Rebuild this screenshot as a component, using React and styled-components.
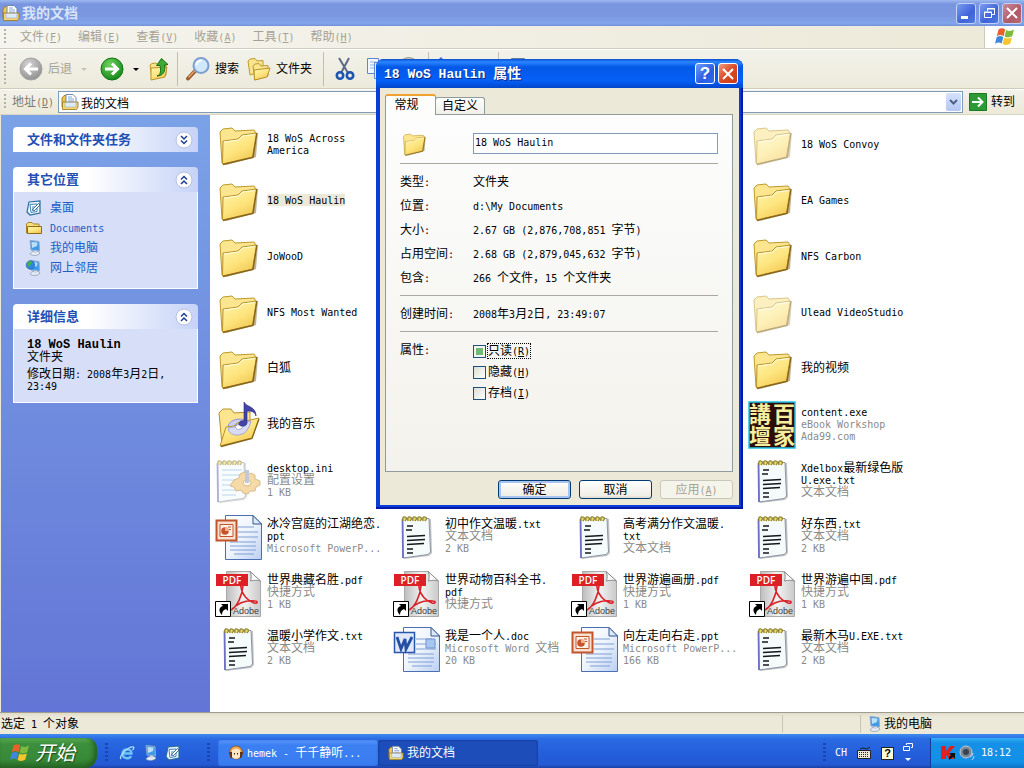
import React, { useEffect, useRef } from 'react';
import styled, { createGlobalStyle, css } from 'styled-components';

const COLORS = {
  FACE: '#ece9d8',
  LINE: '#cfccbc',
  LINK: '#215dc6',
  META: '#8a8a88',
  DISABLED: '#a5a294',
};

const CJK = "'Liberation Sans', 'Noto Sans CJK SC', sans-serif";
const MONO = "'DejaVu Sans Mono', 'Liberation Mono', monospace";

const MENUS = [
  ['文件', 'F'],
  ['编辑', 'E'],
  ['查看', 'V'],
  ['收藏', 'A'],
  ['工具', 'T'],
  ['帮助', 'H'],
];

const PLACES = [
  { name: '桌面', icon: 'desktop' },
  { name: 'Documents', icon: 'smallFolder' },
  { name: '我的电脑', icon: 'computer' },
  { name: '网上邻居', icon: 'network' },
];

const FILES = [
  { col: 1, icon: 'folder', name: ['18 WoS Across', 'America'] },
  { col: 4, icon: 'folder', name: ['18 WoS Convoy'], faded: true },
  { col: 1, icon: 'folder', name: ['18 WoS Haulin'], selected: true },
  { col: 4, icon: 'folder', name: ['EA Games'] },
  { col: 1, icon: 'folder', name: ['JoWooD'] },
  { col: 4, icon: 'folder', name: ['NFS Carbon'] },
  { col: 1, icon: 'folder', name: ['NFS Most Wanted'] },
  { col: 4, icon: 'folder', name: ['Ulead VideoStudio'], faded: true },
  { col: 1, icon: 'folder', name: ['白狐'] },
  { col: 4, icon: 'folder', name: ['我的视频'] },
  { col: 1, icon: 'music', name: ['我的音乐'] },
  { col: 4, icon: 'ebook', name: ['content.exe'], meta: ['eBook Workshop', 'Ada99.com'] },
  { col: 1, icon: 'config', name: ['desktop.ini'], meta: ['配置设置', '1 KB'], faded: true },
  { col: 4, icon: 'text', name: ['Xdelbox最新绿色版', 'U.exe.txt'], meta: ['文本文档'] },
  { col: 1, icon: 'ppt', name: ['冰冷宫庭的江湖绝恋.', 'ppt'], meta: ['Microsoft PowerP...'] },
  { col: 2, icon: 'text', name: ['初中作文温暖.txt'], meta: ['文本文档', '2 KB'] },
  { col: 3, icon: 'text', name: ['高考满分作文温暖.', 'txt'], meta: ['文本文档'] },
  { col: 4, icon: 'text', name: ['好东西.txt'], meta: ['文本文档', '2 KB'] },
  { col: 1, icon: 'pdf', name: ['世界典藏名胜.pdf'], meta: ['快捷方式', '1 KB'] },
  { col: 2, icon: 'pdf', name: ['世界动物百科全书.', 'pdf'], meta: ['快捷方式'] },
  { col: 3, icon: 'pdf', name: ['世界游遍画册.pdf'], meta: ['快捷方式', '1 KB'] },
  { col: 4, icon: 'pdf', name: ['世界游遍中国.pdf'], meta: ['快捷方式', '1 KB'] },
  { col: 1, icon: 'text', name: ['温暖小学作文.txt'], meta: ['文本文档', '2 KB'] },
  { col: 2, icon: 'word', name: ['我是一个人.doc'], meta: ['Microsoft Word 文档', '20 KB'] },
  { col: 3, icon: 'ppt', name: ['向左走向右走.ppt'], meta: ['Microsoft PowerP...', '166 KB'] },
  { col: 4, icon: 'text', name: ['最新木马U.EXE.txt'], meta: ['文本文档', '2 KB'] },
];

const DETAILS = [
  ['类型:', '文件夹'],
  ['位置:', 'd:\\My Documents'],
  ['大小:', '2.67 GB (2,876,708,851 字节)'],
  ['占用空间:', '2.68 GB (2,879,045,632 字节)'],
  ['包含:', '266 个文件，15 个文件夹'],
];

// latin runs are set in a half-width face, the rest stays in the CJK face
function Mixed({ children }) {
  return children
    .split(/([\x20-\x7e]+)/)
    .filter(Boolean)
    .map((run, i) => (/[\x20-\x7e]/.test(run) ? <Latin key={i}>{run}</Latin> : run));
}

function AccessKey({ letter }) {
  return (
    <Latin>
      (<u>{letter}</u>)
    </Latin>
  );
}

/* ---------- icons ---------- */

function FolderIcon({ size = 48 }) {
  return (
    <Svg width={size} height={size} viewBox="0 0 48 48">
      <path d="M10 44 39 36.500 44 11 42 36 12 44z" fill="#7d6a2a" opacity=".5" />
      <path d="M6 11 9 8 18 7 21 10 40 9 42 12 38 36 8 42z" fill="#fbe58e" stroke="#bd9a2c" />
      <path d="M9 20 24 18 28 14 42.500 12 38.500 36 8.500 43z" fill="url(#folderFront)" stroke="#b8922a" />
      <path d="M10 21 24.500 19 28.500 15 41 13.500" fill="none" stroke="#fffbe0" />
      <path d="M9 43.500 39 36.500 43 12" fill="none" stroke="#866315" strokeWidth="1.400" />
    </Svg>
  );
}

function MusicIcon() {
  return (
    <Svg width="48" height="48" viewBox="0 0 48 48">
      <path d="M5 12 9 8 17 8 20 12 36 11 36 30 8 44z" fill="#fbe58e" stroke="#b8922a" />
      <ellipse cx="26" cy="26" rx="12" ry="8" fill="#cdd0f2" stroke="#8f93cf" />
      <path d="M12 26 20 25 23 22 45 17 38 37 6 45z" fill="url(#folderFront)" stroke="#b8922a" />
      <path d="M14 27q1 8 11 7 9-1 12-14L23 23l-3 3z" fill="#d9daf3" stroke="#a4a6d6" />
      <path d="M21 26q2 4 6 2 3-2 3-5l-7 1z" fill="#fff" stroke="#a4a6d6" />
      <path d="M7 45.500 38 37.500 45 18" fill="none" stroke="#866315" strokeWidth="1.300" />
      <path d="M30 17V1c2 5 12 4 12 14-1-4-4-5-9-5v12c0 4-8 4-8 1 0-3 3-4 5-3z" fill="#4444a8" stroke="#25256e" strokeWidth=".6" />
    </Svg>
  );
}

function NotepadIcon({ gear }) {
  const x = gear ? -7 : 0;
  return (
    <Svg width="48" height="48" viewBox="0 0 48 48">
      <g transform={`translate(${x} 0)`}>
        <path d="M12 7 39 6 40 40 37 43 12 46z" fill="#9a9aa2" opacity=".6" />
        <path d="M10.500 6 37 5.500 38.500 39 36 41.500 11 45z" fill="#f5fbfa" stroke="#8d97a8" />
        <path d="M10.500 6 11 45" stroke="#6d6fc4" strokeWidth="1.800" />
        {gear ? (
          <path d="M15 13h20M15 18h20M15 23h20M15 28h20M15 33h20M15 38h14" stroke="#7fb6e0" />
        ) : (
          <path d="M15 13h6M14 17h6M15 23.500 33 22.500M15 27.500 33 26.500M15 31.500 32 30.500M15 36h6M15 40h6" stroke="#15181c" strokeWidth="1.500" />
        )}
        <path
          d="M11 8q-1-5 2-4t0 4M16 8q-1-5 2-4t0 4M21 8q-1-5 2-4t0 4M26 8q-1-5 2-4t0 4M31 8q-1-5 2-4t0 4"
          fill="#e9dc6a"
          stroke="#8f8236"
          strokeWidth="1.300"
        />
      </g>
      {gear && (
        <g>
          <path
            d="M20 23l5-2 1-4 4-2 3 3 4-2 4 2 0 4 5 2v4l-4 2-1 4-5 0-2 3-5-1-2-3-5 1-2-4-4-1z"
            fill="#eebd62"
            stroke="#b98630"
          />
          <ellipse cx="33" cy="26" rx="4" ry="3" fill="#fff4d8" stroke="#b98630" />
          <path d="M31 13h4v13h-4z" fill="#8ea0b8" />
        </g>
      )}
    </Svg>
  );
}

function OfficeIcon({ kind }) {
  const word = kind === 'word';
  return (
    <Svg width="48" height="48" viewBox="0 0 48 48">
      <path d="M11.500 2.500H39L47.500 11V46.500H11.500z" fill="url(#officePage)" stroke="#4a6fb5" />
      <path d="M39 2.500V11H47.500z" fill="#dce8fb" stroke="#34558f" />
      <path d="M24 14h16M24 19h20M24 24h20M16 29h26M16 33h26M16 37h26M20 41h20" stroke="#7f9fd3" />
      {word ? (
        <g>
          <path d="M34 14h9v9h-9z" fill="#a9c6f0" stroke="#6f95d2" />
          <path d="M2.500 7.500h20v20h-20z" fill="#dfe9fb" stroke="#2a56a8" strokeWidth="1.500" />
          <path d="M5 12l4 12 4-10 1 10 6-12" fill="none" stroke="#2450a4" strokeWidth="2.800" />
        </g>
      ) : (
        <g>
          <path d="M2.500 7.500h20v20h-20z" fill="#fbe0d0" stroke="#c2552c" strokeWidth="2" />
          <path d="M6 11.500h13v12H6z" fill="#fff1e6" stroke="#c2552c" />
          <circle cx="11" cy="18" r="3.800" fill="#c2552c" />
          <path d="M11 18V14a4 4 0 0 1 4 4z" fill="#f7b08c" />
          <path d="M14 14h3M15 16.500h2" stroke="#c2552c" />
        </g>
      )}
    </Svg>
  );
}

function PdfIcon() {
  return (
    <Svg width="48" height="48" viewBox="0 0 48 48">
      <path d="M12.500 2.500H36L46.500 12V47.500H12.500z" fill="url(#pdfPage)" stroke="#a9a9a9" />
      <path d="M36 2.500C38 6 37 10 36.500 12c4-1 7-1 10 0z" fill="#fff" stroke="#8c8c8c" />
      <path
        d="M17 41c6-3 11-14 12-24 0-3-3-3-2 1 1 8 7 14 13 16 4 1 4-2 1-2-8-1-17 2-24 9z"
        fill="none"
        stroke="#d8232b"
        strokeWidth="1.600"
      />
      <path d="M2 5h32v12H2z" fill="#dd1f26" />
      <text x="18" y="15" textAnchor="middle" fill="#fff" fontFamily="'Open Sans', sans-serif" fontWeight="600" fontSize="10">
        PDF
      </text>
      <text x="45" y="45" textAnchor="end" fill="#3c3c3c" fontFamily="'Liberation Sans Narrow', 'Liberation Sans', sans-serif" fontSize="9">
        Adobe
      </text>
      <path d="M1.500 32.500h15v15h-15z" fill="#fff" stroke="#000" />
      <path d="M7 35h7v7l-2-2c-3 1-4 3-4 6-4-4-3-8 1-9z" fill="#000" />
    </Svg>
  );
}

function EbookIcon() {
  return (
    <Svg width="48" height="48" viewBox="0 0 48 48">
      <path d="M1 1h46v46H1z" fill="#2c0d08" stroke="#22c3e6" strokeWidth="1.500" />
      <g fill="#f4ee9e" fontFamily={CJK} fontWeight="700" fontSize="22">
        <text x="1" y="21">講</text>
        <text x="25" y="21">百</text>
        <text x="1" y="43">壇</text>
        <text x="25" y="43">家</text>
      </g>
    </Svg>
  );
}

function DocumentsIcon({ size = 18 }) {
  return (
    <Svg width={size} height={size} viewBox="0 0 18 18">
      <path d="M1 5 3 2.500H6V14H1z" fill="#f1c84f" stroke="#8f6d18" strokeWidth=".8" />
      <path d="M5 1.500h7l3 3v8H5z" fill="#fff" stroke="#6f86ad" />
      <path d="M7 4h4M7 6h6M7 8h6" stroke="#7fa4dc" />
      <path d="M1.500 16.500V9H17v5l-1.500 2.500z" fill="#f6d873" stroke="#96721b" strokeWidth=".8" />
      <path d="M4 9.500h11v4.500H4z" fill="#dfeaf7" stroke="#9aa8ba" strokeWidth=".6" />
    </Svg>
  );
}

function ComputerIcon({ size = 16, globe }) {
  return (
    <Svg width={size} height={size} viewBox="0 0 16 16">
      <path d="M4 .5 13 1.500 13.500 11 5 10z" fill="#3d9bea" stroke="#8fa9c9" />
      <path d="M5.500 2 11.500 2.500 11 6 6 8z" fill="#b9e1fc" />
      <path d="M4 14c1-3 8-4 10-1-1 3-9 3-10 1z" fill="#e8edf5" stroke="#8392ab" strokeWidth=".7" />
      <path d="M8 10.500h3v2.500H8z" fill="#ccd6e5" />
      {globe && (
        <g>
          <circle cx="4.500" cy="5" r="4.300" fill="#2e86de" stroke="#1b5ba6" strokeWidth=".6" />
          <path d="M1 4c2-4 4-3 5-2 0 2-2 2-2 4-1 2-3 0-3-2z" fill="#46b14b" />
        </g>
      )}
    </Svg>
  );
}

function DesktopIcon({ size = 16 }) {
  return (
    <Svg width={size} height={size} viewBox="0 0 16 16">
      <path d="M3 2 14 1 14 13 4 15 1 12z" fill="#e9f4fb" stroke="#2e6c9c" strokeWidth="1.200" />
      <path d="M4 4.500 11 4v7.500L5 12.500z" fill="#fff" stroke="#3d87ba" />
      <path d="M6 10 12.500 3.500 14 5 8 11z" fill="#fff" stroke="#2b5f89" strokeWidth=".9" />
      <path d="M6 7h3M6 9h2" stroke="#3d87ba" />
    </Svg>
  );
}

function SmallFolderIcon() {
  return (
    <Svg width="16" height="16" viewBox="0 0 16 16">
      <path d="M.5 4 2 2.500H6L7.500 4H13V13H.5z" fill="#f6de7a" stroke="#a98322" />
      <path d="M1.500 13.500V6.500H15.500V13.500z" fill="url(#folderFront)" stroke="#8f6d18" />
    </Svg>
  );
}

function FlagIcon({ size }) {
  return (
    <Svg width={size} height={size} viewBox="0 0 20 20">
      <path d="M3.500 2.500Q7 0 10.200 2.500L8.600 9.200Q5.500 7 1.800 9.200z" fill="#e8602c" />
      <path d="M11.200 3Q15 5 19 2.500L17.200 9.300Q13 11.500 9.500 9.500z" fill="#7cbb3c" />
      <path d="M1.600 10.200Q5.500 8 8.300 10.200L6.700 16.500Q3.500 14.500 0 16.800z" fill="#3f86dd" />
      <path d="M9.200 10.800Q13 12.500 16.900 10.400L15.200 16.800Q11.500 19 7.600 17z" fill="#f7c52d" />
    </Svg>
  );
}

function ArrowCircle({ left }) {
  const tone = left ? ['#d6d6d6', '#8d8d8d', '#a3a3a3'] : ['#6fd35e', '#128417', '#0d7412'];
  const id = left ? 'backTone' : 'forwardTone';
  return (
    <Svg width="24" height="24" viewBox="0 0 24 24">
      <defs>
        <radialGradient id={id} cx=".4" cy=".3" r=".75">
          <stop offset="0" stopColor={tone[0]} />
          <stop offset="1" stopColor={tone[1]} />
        </radialGradient>
      </defs>
      <circle cx="12" cy="12" r="11" fill={`url(#${id})`} stroke={tone[2]} />
      <path
        d={left ? 'M19 12H7M12 6.500 6.500 12 12 17.500' : 'M5 12H17M12 6.500 17.500 12 12 17.500'}
        fill="none"
        stroke="#fff"
        strokeWidth="3"
      />
    </Svg>
  );
}

function UpFolderIcon() {
  return (
    <Svg width="24" height="24" viewBox="0 0 24 24">
      <path d="M2 8 4 6.500 8 6 10 8 18 8V18L4 22z" fill="#fae48d" stroke="#c09a2a" />
      <path d="M3 11 19 10 17 20 3 23z" fill="url(#folderFront)" stroke="#b8922a" />
      <path d="M9 19C13 18 13 13 12 8.500H8.500L13.500 1.500 20 7.500 16.500 8C18 14 15 19 9 19z" fill="#3cab33" stroke="#166f14" />
    </Svg>
  );
}

function SearchIcon() {
  return (
    <Svg width="24" height="24" viewBox="0 0 24 24">
      <path d="M10 13 2 21.500" stroke="#9c5a2a" strokeWidth="4" strokeLinecap="round" />
      <path d="M9.500 13 2.500 20.500" stroke="#e3a26a" strokeWidth="1.500" />
      <circle cx="15" cy="8.500" r="7.500" fill="#cfe9fb" stroke="#7d9fd0" strokeWidth="2" />
      <path d="M10.500 8a5 5 0 0 1 5-4.500" fill="none" stroke="#fff" strokeWidth="2" />
    </Svg>
  );
}

function FoldersIcon() {
  return (
    <Svg width="24" height="24" viewBox="0 0 24 24">
      <path d="M1 4 3 2 8 1.500 10 4 16 3.500V14L3 18z" fill="#fae48d" stroke="#c09a2a" />
      <path d="M6 9 8 7 12 6.500 14 9 21 8.500V19L8 23z" fill="#fae48d" stroke="#c09a2a" />
      <path d="M7 13 23 11 20 20 7.500 23z" fill="url(#folderFront)" stroke="#b8922a" />
    </Svg>
  );
}

function ScissorsIcon() {
  return (
    <Svg width="24" height="24" viewBox="0 0 24 24">
      <path d="M4 1 13 16M14 1 6 16" stroke="#5b6b86" strokeWidth="2" />
      <ellipse cx="5" cy="18.500" rx="3.200" ry="3.300" fill="none" stroke="#1c55b3" strokeWidth="2.600" />
      <ellipse cx="15" cy="18.500" rx="3.200" ry="3.300" fill="none" stroke="#1c55b3" strokeWidth="2.600" />
    </Svg>
  );
}

function CopyIcon() {
  return (
    <Svg width="24" height="24" viewBox="0 0 24 24">
      <path d="M.5 1.500h11v15H.5z" fill="#f2f7ff" stroke="#5d87cf" />
      <path d="M3 5h6M3 8h6M3 11h6" stroke="#8fb0e6" />
      <path d="M7.500 5.500h11v16h-11z" fill="#e3eeff" stroke="#5d87cf" />
    </Svg>
  );
}

function EditIcon({ kind }) {
  return (
    <Svg width="24" height="24" viewBox="0 0 24 24">
      {kind === 'paste' && <path d="M1 4Q10-3 18 4V22H1z" fill="#c9c5b5" stroke="#99968a" />}
      {kind === 'delete' && <path d="M3 1 20 20M19 3 4 21" stroke="#3b6fcf" strokeWidth="3" />}
      {kind === 'view' && <path d="M4.500 1.500h13v17h-13z" fill="#fff" stroke="#5d79a8" />}
    </Svg>
  );
}

function KeyboardIcon() {
  return (
    <Svg width="16" height="16" viewBox="0 0 16 16">
      <path d="M1.500 5.500h13v8h-13z" fill="#ece9d8" stroke="#222" />
      <path d="M3 7.500h10M3 9.500h10M3 11.500h10" stroke="#222" strokeDasharray="1 1" />
      <path d="M4 4 7 3 11 4 14 2" fill="none" stroke="#222" />
    </Svg>
  );
}

function IeIcon() {
  return (
    <Svg width="16" height="16" viewBox="0 0 16 16">
      <path d="M4 8.500h8.500C12.500 3 4 3 3.500 8.500c0 5.500 7 6 8.500 2.500" fill="none" stroke="#6cc5f5" strokeWidth="2.400" />
      <path d="M2 14C-1 11 10 1 14.500 2c1 1 0 2-1 3" fill="none" stroke="#b5e3fb" strokeWidth="1.200" />
    </Svg>
  );
}

function PlayerIcon() {
  return (
    <Svg width="16" height="16" viewBox="0 0 16 16">
      <circle cx="8" cy="7.500" r="6.500" fill="#f5a94d" stroke="#8a4d18" strokeWidth=".8" />
      <path d="M4 5q4-3 8 0v7q-4 4-8 0z" fill="#ffe7c6" />
      <path d="M1 7h3v6H2.500zM12 7h3l-1.500 6H12z" fill="#5f3513" />
      <path d="M6.500 8v1.500M9.500 8v1.500" stroke="#222" />
    </Svg>
  );
}

function TrayIcons() {
  return (
    <>
      <Svg width="16" height="16" viewBox="0 0 16 16">
        <path d="M1 1h5v5l4-5h5L9 8l5 6H9L6 10v4H1z" fill="#e2201e" />
        <path d="M9 8h6v6l-2-2-4 3 0-3 2-2z" fill="#111" />
      </Svg>
      <Svg width="16" height="16" viewBox="0 0 16 16">
        <circle cx="7" cy="7" r="6" fill="#7d8896" stroke="#c3ccd8" />
        <circle cx="7" cy="7" r="3" fill="#39424f" />
        <path d="M11 12q3-1 3-4M13 15q2-2 2-4" fill="none" stroke="#bcd6f4" />
      </Svg>
    </>
  );
}

function Chevrons({ down }) {
  return (
    <Svg width="18" height="18" viewBox="0 0 18 18">
      <circle cx="9" cy="9" r="8" fill="#fff" stroke="#b6bfdf" />
      <path
        d={down ? 'M6 5 9 8 12 5M6 9.500 9 12.500 12 9.500' : 'M6 8.500 9 5.500 12 8.500M6 13 9 10 12 13'}
        fill="none"
        stroke="#1c3f94"
        strokeWidth="1.500"
      />
    </Svg>
  );
}

function CloseCross() {
  return (
    <Svg width="12" height="12" viewBox="0 0 12 12">
      <path d="M1 1 11 11M11 1 1 11" stroke="#fff" strokeWidth="2" />
    </Svg>
  );
}

const ICONS = {
  folder: () => <FolderIcon />,
  music: () => <MusicIcon />,
  ebook: () => <EbookIcon />,
  config: () => <NotepadIcon gear />,
  text: () => <NotepadIcon />,
  ppt: () => <OfficeIcon kind="ppt" />,
  word: () => <OfficeIcon kind="word" />,
  pdf: () => <PdfIcon />,
  desktop: () => <DesktopIcon />,
  smallFolder: () => <SmallFolderIcon />,
  computer: () => <ComputerIcon />,
  network: () => <ComputerIcon globe />,
};

/* ---------- parts ---------- */

function SharedGradients() {
  return (
    <HiddenSvg width="0" height="0" aria-hidden="true">
      <defs>
        <linearGradient id="folderFront" x1="0" y1="0" x2=".6" y2="1">
          <stop offset="0" stopColor="#fff6b5" />
          <stop offset=".6" stopColor="#fde47c" />
          <stop offset="1" stopColor="#f3c958" />
        </linearGradient>
        <linearGradient id="officePage" x1="0" y1="0" x2="1" y2="1">
          <stop offset="0" stopColor="#ffffff" />
          <stop offset=".5" stopColor="#eef4fd" />
          <stop offset="1" stopColor="#b9cff2" />
        </linearGradient>
        <linearGradient id="pdfPage" x1="0" y1="0" x2="1" y2="0">
          <stop offset="0" stopColor="#bdbdbd" />
          <stop offset=".5" stopColor="#f2f2f2" />
          <stop offset="1" stopColor="#cacaca" />
        </linearGradient>
      </defs>
    </HiddenSvg>
  );
}

function FileItem({ file }) {
  return (
    <FileCell $col={file.col}>
      <FileIcon $faded={file.faded}>{ICONS[file.icon]()}</FileIcon>
      <FileText>
        {file.name.map((line) => (
          <FileName key={line} $selected={file.selected}>
            <Mixed>{line}</Mixed>
          </FileName>
        ))}
        {file.meta?.map((line) => (
          <FileMeta key={line}>
            <Mixed>{line}</Mixed>
          </FileMeta>
        ))}
      </FileText>
    </FileCell>
  );
}

function Explorer() {
  return (
    <Window>
      <TitleBar>
        <DocumentsIcon />
        <h1>我的文档</h1>
        <CaptionButtons>
          <CaptionButton type="button" aria-label="Minimize">
            <Svg width="12" height="12" viewBox="0 0 12 12">
              <path d="M1 9h7v3H1z" fill="#fff" />
            </Svg>
          </CaptionButton>
          <CaptionButton type="button" aria-label="Restore">
            <Svg width="12" height="12" viewBox="0 0 12 12">
              <path d="M4.500 4V1.500h7v6H9M4 2h8M1.500 5.500h7v5h-7zM1 5h8" fill="none" stroke="#fff" />
            </Svg>
          </CaptionButton>
          <CaptionButton type="button" aria-label="Close" $tone="dim">
            <CloseCross />
          </CaptionButton>
        </CaptionButtons>
      </TitleBar>

      <MenuBar>
        <Grip />
        {MENUS.map(([name, letter]) => (
          <MenuButton type="button" key={letter}>
            {name}
            <AccessKey letter={letter} />
          </MenuButton>
        ))}
        <Throbber>
          <FlagIcon size={20} />
        </Throbber>
      </MenuBar>

      <Toolbar>
        <Grip />
        <ToolButton type="button" disabled>
          <ArrowCircle left />
          后退
        </ToolButton>
        <Caret $disabled />
        <ToolButton type="button" aria-label="Forward">
          <ArrowCircle />
        </ToolButton>
        <Caret />
        <ToolButton type="button" aria-label="Up">
          <UpFolderIcon />
        </ToolButton>
        <Divider />
        <ToolButton type="button">
          <SearchIcon />
          搜索
        </ToolButton>
        <ToolButton type="button">
          <FoldersIcon />
          文件夹
        </ToolButton>
        <Divider $wide />
        <ToolButton type="button" aria-label="Cut">
          <ScissorsIcon />
        </ToolButton>
        <ToolButton type="button" aria-label="Copy">
          <CopyIcon />
        </ToolButton>
        <ToolButton type="button" aria-label="Paste">
          <EditIcon kind="paste" />
        </ToolButton>
        <Divider />
        <ToolButton type="button" aria-label="Delete">
          <EditIcon kind="delete" />
        </ToolButton>
        <ToolButton type="button" aria-label="Undo">
          <EditIcon />
        </ToolButton>
        <Divider />
        <ToolButton type="button" aria-label="Views">
          <EditIcon kind="view" />
        </ToolButton>
      </Toolbar>

      <AddressBar>
        <Grip />
        <label htmlFor="address">
          地址
          <AccessKey letter="D" />
        </label>
        <AddressBox>
          <DocumentsIcon />
          <input id="address" defaultValue="我的文档" />
          <DropButton type="button" aria-label="Show addresses">
            <Svg width="9" height="6" viewBox="0 0 9 6">
              <path d="M1 1 4.500 4.500 8 1" fill="none" stroke="#4d6185" strokeWidth="2" />
            </Svg>
          </DropButton>
        </AddressBox>
        <GoButton type="button">
          <Svg width="18" height="18" viewBox="0 0 18 18">
            <path d="M.5.5h17v17H.5z" fill="#2d9a35" stroke="#1a7a22" />
            <path d="M3 9h10M9 4.500 13.500 9 9 13.500" fill="none" stroke="#fff" strokeWidth="2" />
          </Svg>
          转到
        </GoButton>
      </AddressBar>

      <Main>
        <TaskPane>
          <PaneBox>
            <PaneHead>
              <h2>文件和文件夹任务</h2>
              <PaneToggle type="button" aria-label="Expand">
                <Chevrons down />
              </PaneToggle>
            </PaneHead>
          </PaneBox>
          <PaneBox>
            <PaneHead>
              <h2>其它位置</h2>
              <PaneToggle type="button" aria-label="Collapse">
                <Chevrons />
              </PaneToggle>
            </PaneHead>
            <PlaceList>
              {PLACES.map((place) => (
                <li key={place.name}>
                  <PlaceLink href="#">
                    {ICONS[place.icon]()}
                    <span>
                      <Mixed>{place.name}</Mixed>
                    </span>
                  </PlaceLink>
                </li>
              ))}
            </PlaceList>
          </PaneBox>
          <PaneBox>
            <PaneHead>
              <h2>详细信息</h2>
              <PaneToggle type="button" aria-label="Collapse">
                <Chevrons />
              </PaneToggle>
            </PaneHead>
            <PaneDetails>
              <strong>18 WoS Haulin</strong>
              <p>文件夹</p>
              <p>
                <Mixed>修改日期: 2008年3月2日,</Mixed>
                <br />
                <Mixed>23:49</Mixed>
              </p>
            </PaneDetails>
          </PaneBox>
        </TaskPane>
        <FileGrid>
          {FILES.map((file) => (
            <FileItem key={file.name[0]} file={file} />
          ))}
        </FileGrid>
      </Main>

      <StatusBar>
        <StatusText>
          <Mixed>选定 1 个对象</Mixed>
        </StatusText>
        <StatusCell $width={78} />
        <StatusCell $width={164}>
          <ComputerIcon />
          我的电脑
        </StatusCell>
      </StatusBar>
    </Window>
  );
}

function PropertiesDialog() {
  const readOnlyRef = useRef();

  useEffect(() => {
    readOnlyRef.current.indeterminate = true;
  }, []);

  return (
    <Dialog role="dialog" aria-labelledby="dialog-title">
      <DialogTitle>
        <h2 id="dialog-title">
          <span>18 WoS Haulin </span>属性
        </h2>
        <CaptionButtons>
          <CaptionButton type="button" aria-label="Help" $tone="active">
            ?
          </CaptionButton>
          <CaptionButton type="button" aria-label="Close" $tone="close">
            <CloseCross />
          </CaptionButton>
        </CaptionButtons>
      </DialogTitle>
      <DialogBody>
        <TabList role="tablist">
          <Tab type="button" role="tab" aria-selected="true" $active>
            常规
          </Tab>
          <Tab type="button" role="tab" aria-selected="false">
            自定义
          </Tab>
        </TabList>
        <TabPanel role="tabpanel">
          <PropRow $height={39}>
            <FolderIcon size={28} />
            <NameInput aria-label="名称" defaultValue="18 WoS Haulin" />
          </PropRow>
          <Section>
            {DETAILS.map(([label, value]) => (
              <PropRow key={label}>
                <span>
                  <Mixed>{label}</Mixed>
                </span>
                <span>
                  <Mixed>{value}</Mixed>
                </span>
              </PropRow>
            ))}
          </Section>
          <Section>
            <PropRow>
              <span>
                <Mixed>创建时间:</Mixed>
              </span>
              <span>
                <Mixed>2008年3月2日, 23:49:07</Mixed>
              </span>
            </PropRow>
          </Section>
          <Section>
            <PropRow $top>
              <span>
                <Mixed>属性:</Mixed>
              </span>
              <CheckList>
                <CheckLabel>
                  <CheckBox type="checkbox" ref={readOnlyRef} />
                  <CheckText $focused>
                    只读
                    <AccessKey letter="R" />
                  </CheckText>
                </CheckLabel>
                <CheckLabel>
                  <CheckBox type="checkbox" />
                  <CheckText>
                    隐藏
                    <AccessKey letter="H" />
                  </CheckText>
                </CheckLabel>
                <CheckLabel>
                  <CheckBox type="checkbox" />
                  <CheckText>
                    存档
                    <AccessKey letter="I" />
                  </CheckText>
                </CheckLabel>
              </CheckList>
            </PropRow>
          </Section>
        </TabPanel>
        <ButtonRow>
          <DialogButton type="button" $primary>
            确定
          </DialogButton>
          <DialogButton type="button">取消</DialogButton>
          <DialogButton type="button" disabled>
            应用
            <AccessKey letter="A" />
          </DialogButton>
        </ButtonRow>
      </DialogBody>
    </Dialog>
  );
}

function Taskbar() {
  return (
    <Bar>
      <StartButton type="button">
        <FlagIcon size={20} />
        <span>开始</span>
      </StartButton>
      <TaskGrip />
      <QuickLaunch>
        <IeIcon />
        <ComputerIcon />
        <DesktopIcon />
      </QuickLaunch>
      <TaskGrip />
      <TaskButton type="button">
        <PlayerIcon />
        <span>
          <Mixed>hemek - 千千静听...</Mixed>
        </span>
      </TaskButton>
      <TaskButton type="button" $pressed>
        <DocumentsIcon size={16} />
        <span>我的文档</span>
      </TaskButton>
      <LanguageBar>
        <TaskGrip />
        <Latin>CH</Latin>
        <KeyboardIcon />
        <HelpBox>?</HelpBox>
        <Svg width="10" height="22" viewBox="0 0 10 22">
          <path d="M3.500 3V1.500h6v4H8M.5 4.500h6v4h-6z" fill="none" stroke="#fff" />
          <path d="M2 16h6l-3 3z" fill="#fff" />
        </Svg>
      </LanguageBar>
      <Tray>
        <TrayIcons />
        <Clock>18:12</Clock>
      </Tray>
    </Bar>
  );
}

function App() {
  return (
    <>
      <GlobalStyle />
      <SharedGradients />
      <Screen>
        <Explorer />
        <Taskbar />
        <PropertiesDialog />
      </Screen>
    </>
  );
}

export default App;

/* ---------- styles ---------- */

const GlobalStyle = createGlobalStyle`
  * {
    box-sizing: border-box;
  }

  body {
    margin: 0;
    font: 12px/12px ${CJK};
    color: #000;
  }

  h1, h2, p, ul {
    margin: 0;
    padding: 0;
  }

  ul {
    list-style: none;
  }

  button, input {
    font: inherit;
    color: inherit;
    margin: 0;
    padding: 0;
    border: 0;
    background: none;
    outline: none;
  }
`;

const Latin = styled.span`
  font-family: ${MONO};
  font-size: 10px;
  line-height: 0;
  white-space: pre;
`;

const Svg = styled.svg`
  display: block;
  flex: none;
  overflow: visible;
`;

const HiddenSvg = styled.svg`
  position: absolute;
`;

const Screen = styled.div`
  position: relative;
  display: flex;
  flex-direction: column;
  min-height: 100vh;
  background: ${COLORS.FACE};
`;

const Window = styled.div`
  flex: 1;
  display: flex;
  flex-direction: column;
`;

const TitleBar = styled.header`
  display: flex;
  align-items: center;
  gap: 2px;
  height: 26px;
  padding: 0 2px;
  background: linear-gradient(#9db9f0 0, #7a95df 4px, #7b97e0 60%, #82a5e8 90%, #7390dc);

  h1 {
    flex: 1;
    font-size: 14px;
    line-height: 20px;
    color: #d8e4f8;
  }
`;

const TONES = {
  normal: 'linear-gradient(135deg, #7b9cf0, #3f63d8 60%, #4f78e4)',
  active: 'linear-gradient(135deg, #6f9cf8, #2a5ce0 60%, #2f6cf0)',
  dim: 'linear-gradient(135deg, #c98b9c, #b05a68 60%, #b96a70)',
  close: 'linear-gradient(135deg, #f09a80, #dc4a24 50%, #c83c18)',
};

const CaptionButtons = styled.div`
  display: flex;
  gap: 3px;
`;

const CaptionButton = styled.button`
  display: flex;
  align-items: center;
  justify-content: center;
  width: 20px;
  height: 21px;
  border: 1px solid ${({ $tone }) => ($tone === 'active' || $tone === 'close' ? '#fff' : '#c3d1f5')};
  border-radius: 3px;
  background: ${({ $tone = 'normal' }) => TONES[$tone]};
  color: #fff;
  font: bold 17px/18px 'Liberation Sans', sans-serif;
`;

const Grip = styled.span`
  flex: none;
  width: 2px;
  height: 16px;
  background: repeating-linear-gradient(#b5b2a3 0 2px, transparent 2px 4px);
`;

const MenuBar = styled.nav`
  display: flex;
  align-items: center;
  height: 23px;
  padding-left: 4px;
  background: linear-gradient(90deg, #f5f4ee, ${COLORS.FACE});
  border-bottom: 1px solid ${COLORS.LINE};

  ${Grip} {
    margin-right: 6px;
  }
`;

const MenuButton = styled.button`
  padding: 0 8px;
  line-height: 20px;
  white-space: nowrap;
  color: ${COLORS.DISABLED};
`;

const Throbber = styled.div`
  display: flex;
  align-items: center;
  justify-content: center;
  align-self: stretch;
  width: 40px;
  margin-left: auto;
  border-left: 1px solid ${COLORS.LINE};
  background: #fff;
`;

const Toolbar = styled.div`
  display: flex;
  align-items: center;
  height: 40px;
  padding-left: 4px;
  background: linear-gradient(#f3f2ea, #eceadb);
  border-top: 1px solid #fff;
  border-bottom: 1px solid ${COLORS.LINE};
  overflow: hidden;

  ${Grip} {
    height: 30px;
    margin-right: 9px;
  }
`;

const ToolButton = styled.button`
  display: flex;
  align-items: center;
  gap: 5px;
  padding: 0 4px;
  line-height: 20px;
  white-space: nowrap;
  color: ${({ disabled }) => (disabled ? COLORS.DISABLED : '#000')};
`;

const Caret = styled.span`
  margin: 0 ${({ $disabled }) => ($disabled ? 9 : 5)}px 0 5px;
  border: 3px solid transparent;
  border-bottom: 0;
  border-top-color: ${({ $disabled }) => ($disabled ? '#c5c2b5' : '#000')};
`;

const Divider = styled.span`
  width: 1px;
  height: 34px;
  margin: ${({ $wide }) => ($wide ? '0 7px' : '0 4px 0 1px')};
  background: #c1beae;
`;

const AddressBar = styled.div`
  display: flex;
  align-items: center;
  height: 26px;
  padding: 0 9px 0 4px;
  background: linear-gradient(#f3f2ea, ${COLORS.FACE});
  border-top: 1px solid #fff;
  border-bottom: 1px solid #d9d6c6;

  label {
    margin: 0 4px 0 6px;
    line-height: 20px;
    color: #7f7c70;
  }
`;

const AddressBox = styled.div`
  flex: 1;
  display: flex;
  align-items: center;
  gap: 2px;
  height: 22px;
  padding: 1px 1px 1px 2px;
  border: 1px solid #7f9db9;
  background: #fff;

  input {
    flex: 1;
    min-width: 0;
    height: 18px;
  }
`;

const DropButton = styled.button`
  display: flex;
  align-items: center;
  justify-content: center;
  width: 15px;
  height: 18px;
  border-radius: 2px;
  background: linear-gradient(#d6e2fc, #b4c8f6);
`;

const GoButton = styled.button`
  display: flex;
  align-items: center;
  gap: 4px;
  margin-left: 6px;
`;

const Main = styled.main`
  flex: 1;
  display: flex;
  border-left: 1px solid ${COLORS.FACE};
  background: #fff;
`;

const TaskPane = styled.aside`
  flex: none;
  display: flex;
  flex-direction: column;
  gap: 15px;
  width: 209px;
  padding: 12px;
  background: linear-gradient(#7ba2e7, #6375d6);
`;

const PaneBox = styled.section`
  border-radius: 4px 4px 0 0;
  overflow: hidden;
`;

const PaneHead = styled.div`
  display: flex;
  align-items: center;
  justify-content: space-between;
  height: 25px;
  padding: 0 5px 0 14px;
  background: linear-gradient(90deg, #fff 40%, #c6d3f7);

  h2 {
    font-size: 13px;
    line-height: 20px;
    color: #1f4fb4;
  }
`;

const PaneToggle = styled.button`
  display: flex;
`;

const PlaceList = styled.ul`
  padding: 6px 12px 10px;
  border: 1px solid #fff;
  border-top: 0;
  background: #d6dff7;
`;

const PlaceLink = styled.a`
  display: flex;
  align-items: center;
  gap: 8px;
  height: 20px;
  color: ${COLORS.LINK};
  text-decoration: none;
`;

const PaneDetails = styled.div`
  padding: 10px 13px;
  border: 1px solid #fff;
  border-top: 0;
  background: #d6dff7;

  strong {
    display: block;
    font: bold 12px/12px 'Liberation Mono', monospace;
  }

  p + p {
    margin-top: 5px;
  }
`;

const FileGrid = styled.ul`
  flex: 1;
  display: grid;
  grid-template-columns: repeat(4, 178px);
  grid-auto-rows: 56px;
  align-content: start;
  padding: 2px 0 20px 4px;
`;

const FileCell = styled.li`
  grid-column: ${({ $col }) => $col};
  display: flex;
  align-items: center;
  gap: 5px;
`;

const FileIcon = styled.span`
  flex: none;
  opacity: ${({ $faded }) => ($faded ? 0.55 : 1)};
`;

const FileText = styled.div`
  display: flex;
  flex-direction: column;
  align-items: flex-start;
  padding-bottom: 2px;
  white-space: nowrap;
`;

const FileName = styled.span`
  height: 12px;
  line-height: 12px;
  ${({ $selected }) =>
    $selected &&
    css`
      background: ${COLORS.FACE};
    `}
`;

const FileMeta = styled.span`
  height: 12px;
  line-height: 12px;
  color: ${COLORS.META};
`;

const StatusBar = styled.footer`
  display: flex;
  align-items: center;
  height: 22px;
  border-top: 1px solid #a09d90;
  background: linear-gradient(#dedbca, ${COLORS.FACE} 4px);
`;

const StatusText = styled.span`
  flex: 1;
  padding-left: 1px;
`;

const StatusCell = styled.span`
  display: flex;
  align-items: center;
  gap: 2px;
  width: ${({ $width }) => $width}px;
  height: 18px;
  padding-left: 5px;
  border-left: 1px solid #c9c6b6;
`;

const Bar = styled.footer`
  display: flex;
  align-items: stretch;
  height: 34px;
  padding-top: 4px;
  background: linear-gradient(#3f8cf0 0, #2a6ae2 5px, #245edb 60%, #2459d3 90%, #1941a5);
`;

const StartButton = styled.button`
  display: flex;
  align-items: center;
  gap: 5px;
  width: 97px;
  padding-left: 10px;
  border-radius: 0 10px 12px 0;
  background: linear-gradient(#5aab55 0, #3c8f3c 20%, #388a38 70%, #2c722c);
  box-shadow: inset -3px -2px 5px #225f22;
  color: #fff;

  span {
    font-size: 20px;
    line-height: 24px;
    font-style: italic;
    text-shadow: 1px 1px 1px #1d4d1d;
  }
`;

const TaskGrip = styled.span`
  flex: none;
  align-self: center;
  width: 3px;
  height: 20px;
  margin: 0 8px;
  background: repeating-linear-gradient(#1a46b0 0 2px, transparent 2px 4px);
`;

const QuickLaunch = styled.div`
  display: flex;
  align-items: center;
  gap: 7px;
  width: 83px;
  padding-left: 3px;
`;

const TaskButton = styled.button`
  display: flex;
  align-items: center;
  gap: 3px;
  width: 160px;
  margin: 2px 0;
  padding-left: 10px;
  border-radius: 3px;
  background: ${({ $pressed }) => ($pressed ? '#1c4db8' : 'linear-gradient(#5b98fb, #3b80f3 5px, #3a7cee)')};
  box-shadow: inset 0 0 2px ${({ $pressed }) => ($pressed ? '#0c2c7c' : '#2a5fd0')};
  color: #fff;
  white-space: nowrap;
`;

const LanguageBar = styled.div`
  display: flex;
  align-items: center;
  gap: 9px;
  margin-left: auto;
  padding-right: 17px;
  color: #fff;

  ${TaskGrip} {
    margin: 0;
  }
`;

const HelpBox = styled.span`
  width: 13px;
  height: 13px;
  border: 1px solid #222;
  background: #fffbd8;
  color: #000;
  font: bold 11px/11px 'Liberation Sans', sans-serif;
  text-align: center;
`;

const Tray = styled.div`
  display: flex;
  align-items: center;
  gap: 3px;
  width: 94px;
  padding-left: 9px;
  border-left: 1px solid #0f3b9c;
  background: linear-gradient(#35b0f6 0, #1590e6 5px, #1290e8 80%, #0f72c4);
  color: #fff;
`;

const Clock = styled.time`
  margin-left: 3px;
  font: 10px/12px ${MONO};
`;

const Dialog = styled.div`
  position: absolute;
  left: 376px;
  top: 59px;
  display: flex;
  flex-direction: column;
  width: 367px;
  padding: 0 4px 4px;
  border-radius: 8px 8px 0 0;
  background: #0a3cd8;
  box-shadow: inset -2px -2px 0 #0019a8;
`;

const DialogTitle = styled.header`
  display: flex;
  align-items: center;
  height: 29px;
  margin: 0 -4px;
  padding: 0 5px 0 8px;
  border-radius: 8px 8px 0 0;
  background: linear-gradient(#0a4fd0 0, #2a86ff 3px, #0458e6 8px, #0560f8 75%, #0246c8);

  h2 {
    flex: 1;
    font-size: 14px;
    line-height: 20px;
    color: #fff;
    text-shadow: 1px 1px 0 #0a2a80;
  }

  h2 span {
    font: bold 13px/20px 'Liberation Mono', monospace;
    white-space: pre;
  }
`;

const DialogBody = styled.div`
  padding: 6px 6px 6px 5px;
  background: ${COLORS.FACE};
`;

const TabList = styled.div`
  display: flex;
  align-items: flex-end;
  height: 20px;
`;

const Tab = styled.button`
  height: 17px;
  padding: 0 6px;
  border: 1px solid #919b9c;
  border-bottom: 0;
  border-radius: 3px 3px 0 0;
  background: linear-gradient(#fff, #f0efe8);
  ${({ $active }) =>
    $active &&
    css`
      position: relative;
      z-index: 1;
      height: 21px;
      width: 51px;
      margin: 0 -1px -1px 0;
      padding: 0 15px 2px 7px;
      border-top: 2px solid #f0a030;
      background: #fdfdfc;
    `}
`;

const TabPanel = styled.div`
  height: 358px;
  padding: 9px 14px;
  border: 1px solid #919b9c;
  background: linear-gradient(#fdfdfd, #f3f2ec);
`;

const Section = styled.div`
  padding: 6px 0 5px;
  border-top: 1px solid #a9a8a0;
`;

const PropRow = styled.div`
  display: grid;
  grid-template-columns: 73px 1fr;
  align-items: ${({ $top }) => ($top ? 'start' : 'center')};
  min-height: ${({ $height = 24 }) => $height}px;
  white-space: nowrap;
  ${({ $top }) =>
    $top &&
    css`
      padding-top: 6px;
    `}
`;

const NameInput = styled.input`
  height: 21px;
  padding: 0 1px 2px;
  border: 1px solid #7f9db9;
  background: #fff;
  font: 10px/12px ${MONO};
`;

const CheckList = styled.div`
  display: flex;
  flex-direction: column;
  gap: 7px;
`;

const CheckLabel = styled.label`
  display: flex;
  align-items: center;
  gap: 2px;
  height: 14px;
`;

const CheckBox = styled.input`
  appearance: none;
  width: 13px;
  height: 13px;
  border: 1px solid #1c5180;
  background: linear-gradient(135deg, #dcdcd7, #fff);

  &:indeterminate {
    padding: 2px;
    background: #73b973 content-box;
    box-shadow: inset 0 0 0 2px #f4f4f0;
  }
`;

const CheckText = styled.span`
  height: 14px;
  line-height: 14px;
  outline: ${({ $focused }) => ($focused ? '1px dotted #000' : 'none')};
`;

const ButtonRow = styled.div`
  display: flex;
  justify-content: flex-end;
  gap: 8px;
  padding-top: 8px;
`;

const DialogButton = styled.button`
  width: 73px;
  height: 19px;
  border: 1px solid ${({ disabled }) => (disabled ? '#c9c7ba' : '#003c74')};
  border-radius: 3px;
  background: ${({ disabled }) => (disabled ? '#f5f4ea' : 'linear-gradient(#fff, #f0eee6 85%, #dcd8ca)')};
  color: ${({ disabled }) => (disabled ? COLORS.DISABLED : '#000')};
  ${({ $primary }) =>
    $primary &&
    css`
      box-shadow: inset 0 0 0 2px #a9c4f3;
    `}
`;
